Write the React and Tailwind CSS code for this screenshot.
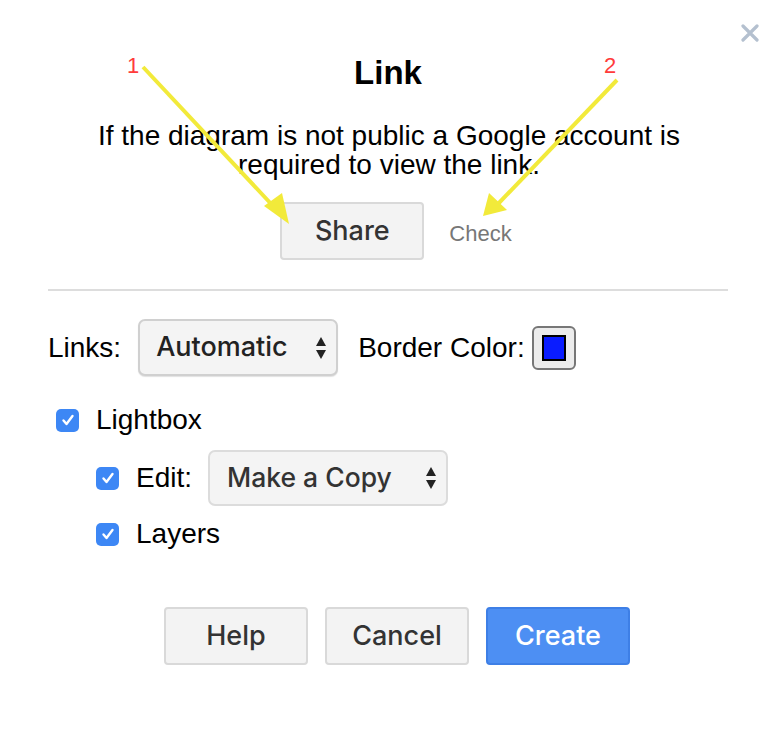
import { useState } from 'react'

export default function App() {

    const [lightbox, setLightbox] = useState(true)
    const [edit, setEdit] = useState(true)
    const [layers, setLayers] = useState(true)

    return (

        <div className="relative w-[768px] h-[756px] bg-white overflow-hidden text-black font-['Liberation_Sans',Arial,sans-serif]">

            {/* CLOSE */}

            <button className="absolute left-[741px] top-[24px] w-[18px] h-[18px]">
                <svg viewBox="0 0 18 18" className="w-[18px] h-[18px]">
                    <path d="M2 2 L16 16 M16 2 L2 16" stroke="#b4c0cf" strokeWidth="3.2" strokeLinecap="round" />
                </svg>
            </button>


            <div className="pt-[57px]">

                <h1 className="text-[33px] leading-[32px] font-bold text-center pl-[8px]">
                    Link
                </h1>

                <p className="mt-[32px] text-[28px] leading-[29px] text-center pl-[58px] pr-[48px]">
                    If the diagram is not public a Google account is required to view the link.
                </p>


                {/* SHARE / CHECK */}

                <div className="flex items-center justify-center gap-[25px] mt-[23px] pl-[24px]">

                    <Btn>Share</Btn>

                    <span className="text-[22px] text-[#777] mt-[4px]">Check</span>

                </div>

                <div className="mx-[48px] w-[680px] h-[2px] bg-[#dddddd] mt-[29px]"></div>


                {/* LINKS */}

                <div className="flex items-center h-[57px] mt-[28px] pl-[48px]">

                    <span className="text-[28px]">Links:</span>

                    <div className="ml-[17px] w-[200px] h-[57px] flex items-center justify-between pl-[16px] pr-[9px] rounded-[7px] border-2 border-[#d0d0d0] bg-[#f4f4f4] shadow-[0_1px_1px_rgba(0,0,0,0.12)]">
                        <span className="text-[27px] font-medium text-[#222] font-['Inter',sans-serif]">Automatic</span>
                        <UpDown />
                    </div>

                    <span className="ml-[20px] text-[28px]">Border Color:</span>

                    <div className="ml-[7px] w-[44px] h-[44px] rounded-[6px] border-2 border-[#777] bg-[#ececec] flex items-center justify-center">
                        <div className="w-[24px] h-[26px] border-2 border-black bg-[#0a1cff]"></div>
                    </div>

                </div>


                {/* OPTIONS */}

                <div className="flex items-center h-[32px] mt-[28px] pl-[56px]">
                    <CheckBox checked={lightbox} onChange={setLightbox} />
                    <span className="ml-[17px] text-[28px]">Lightbox</span>
                </div>

                <div className="flex items-center h-[56px] mt-[14px] pl-[96px]">
                    <CheckBox checked={edit} onChange={setEdit} />
                    <span className="ml-[17px] text-[28px]">Edit:</span>

                    <div className="ml-[16px] w-[240px] h-[56px] flex items-center justify-between pl-[17px] pr-[9px] rounded-[7px] border-2 border-[#dcdcdc] bg-[#f4f4f4]">
                        <span className="text-[26.5px] font-medium text-[#333] font-['Inter',sans-serif]">Make a Copy</span>
                        <UpDown />
                    </div>
                </div>

                <div className="flex items-center h-[32px] mt-[12px] pl-[96px]">
                    <CheckBox checked={layers} onChange={setLayers} />
                    <span className="ml-[17px] text-[28px]">Layers</span>
                </div>


                {/* ACTIONS */}

                <div className="flex gap-[17px] mt-[57px] pl-[164px]">

                    <Btn>Help</Btn>

                    <Btn>Cancel</Btn>

                    <button className="w-[144px] h-[58px] bg-[#4d8ff3] border-2 border-[#3e7fe6] rounded-[4px] text-[27px] font-medium text-white font-['Inter',sans-serif]">
                        Create
                    </button>

                </div>

            </div>


            {/* ANNOTATIONS */}

            <svg className="absolute inset-0 pointer-events-none" width="768" height="756">
                <line x1="143" y1="67" x2="275" y2="208" stroke="#f2ea3a" strokeWidth="4" />
                <polygon points="289,224 264,206 282,193" fill="#f2ea3a" />
                <line x1="617" y1="80" x2="497" y2="205" stroke="#f2ea3a" strokeWidth="4" />
                <polygon points="483,216 489,193 507,210" fill="#f2ea3a" />
                <text x="127" y="73" fill="#ff3b3b" fontSize="22" fontFamily="Liberation Sans, Arial, sans-serif">1</text>
                <text x="604" y="73" fill="#ff3b3b" fontSize="22" fontFamily="Liberation Sans, Arial, sans-serif">2</text>
            </svg>

        </div>

    )
}



function Btn({ children }) {

    return (

        <button className="w-[144px] h-[58px] bg-[#f3f3f3] border-2 border-[#d9d9d9] rounded-[4px] text-[27px] font-medium text-[#333] font-['Inter',sans-serif]">
            {children}
        </button>

    )
}



function CheckBox({ checked, onChange }) {

    return (

        <button
            onClick={() => onChange(!checked)}
            className={"w-[23px] h-[23px] rounded-[5px] flex items-center justify-center " + (checked ? "bg-[#3d87f5]" : "bg-white border border-gray-400")}
        >
            {checked && (
                <svg viewBox="0 0 16 16" className="w-[16px] h-[16px]">
                    <path d="M3.5 8.5 L6.5 12 L12.5 4" stroke="white" strokeWidth="2.4" fill="none" strokeLinecap="round" strokeLinejoin="round" />
                </svg>
            )}
        </button>

    )
}



function UpDown() {

    return (

        <svg viewBox="0 0 12 24" className="w-[12px] h-[24px]">
            <polygon points="6,1 11,10 1,10" fill="#222" />
            <polygon points="6,23 11,14 1,14" fill="#222" />
        </svg>

    )
}
